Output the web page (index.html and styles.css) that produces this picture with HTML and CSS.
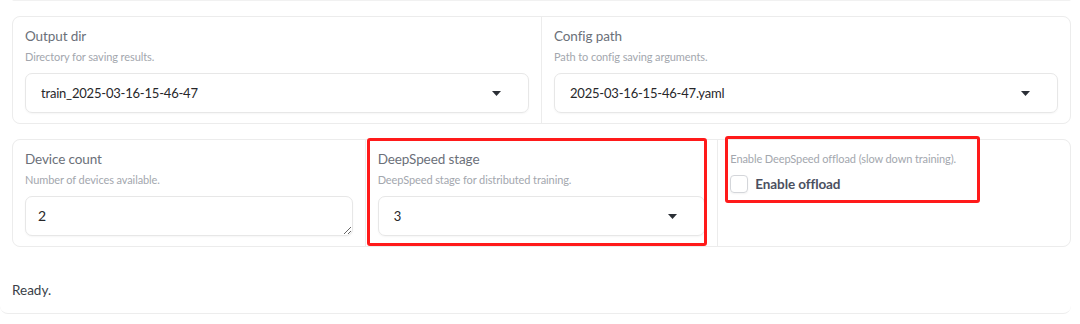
FILE: index.html
```html
<!DOCTYPE html>
<html lang="en">

<head>
    <meta charset="UTF-8">
    <meta name="viewport" content="width=device-width, initial-scale=1.0">
    <title>Train settings</title>
    <link rel="stylesheet" href="styles.css">
</head>

<body>
    <div class="page">
        <div class="prev-edge"></div>

        <div class="form-row cols-2">
            <div class="block">
                <span class="label">Output dir</span>
                <span class="info">Directory for saving results.</span>
                <div class="dropdown">
                    <span class="value">train_2025-03-16-15-46-47</span>
                    <svg class="caret" width="9" height="5" viewBox="0 0 9 5"><path d="M0 0 L9 0 L4.5 5 Z" fill="#2b2f36"/></svg>
                </div>
            </div>
            <div class="block">
                <span class="label">Config path</span>
                <span class="info">Path to config saving arguments.</span>
                <div class="dropdown">
                    <span class="value">2025-03-16-15-46-47.yaml</span>
                    <svg class="caret" width="9" height="5" viewBox="0 0 9 5"><path d="M0 0 L9 0 L4.5 5 Z" fill="#2b2f36"/></svg>
                </div>
            </div>
        </div>

        <div class="form-row cols-3">
            <div class="block">
                <span class="label">Device count</span>
                <span class="info">Number of devices available.</span>
                <textarea class="textbox" rows="1">2</textarea>
            </div>
            <div class="block">
                <span class="label">DeepSpeed stage</span>
                <span class="info">DeepSpeed stage for distributed training.</span>
                <div class="dropdown">
                    <span class="value">3</span>
                    <svg class="caret" width="9" height="5" viewBox="0 0 9 5"><path d="M0 0 L9 0 L4.5 5 Z" fill="#2b2f36"/></svg>
                </div>
            </div>
            <div class="block">
                <span class="info">Enable DeepSpeed offload (slow down training).</span>
                <label class="check">
                    <span class="box"></span>
                    <span class="check-text">Enable offload</span>
                </label>
            </div>

            <!-- annotation boxes -->
            <div class="mark mark-stage"></div>
            <div class="mark mark-offload"></div>
        </div>

        <div class="status">Ready.</div>
    </div>
</body>

</html>
```

FILE: styles.css
```css
body {
    margin: 0;
    padding: 0;
    background: #fff;
    font-family: 'Lato', 'Noto Sans', sans-serif;
    color: #27272a;
}

.page {
    width: 1059px;
    padding: 0 9px 0 12px;
}

.prev-edge {
    height: 1px;
    border-bottom: 1px solid #f1f1f1;
    margin-top: -1px;
    border-radius: 0 0 8px 8px;
}

.form-row {
    display: grid;
    gap: 1px;
    background: #ececec;
    border: 1px solid #ececec;
    border-radius: 8px;
    margin-top: 15px;
}

.cols-2 {
    grid-template-columns: 1fr 1fr;
}

.cols-3 {
    grid-template-columns: repeat(3, 1fr);
    position: relative;
}

.block {
    background: #fff;
    padding: 9px 12px 10px 12px;
    display: flex;
    flex-direction: column;
}

.block:first-child {
    border-radius: 7px 0 0 7px;
}

.cols-2 .block:nth-child(2),
.cols-3 .block:nth-child(3) {
    border-radius: 0 7px 7px 0;
}

.cols-3 .block:nth-child(3) {
    padding-top: 8px;
}

.label {
    font-size: 13.5px;
    line-height: 20px;
    color: #6b7079;
    letter-spacing: -0.1px;
}

.info {
    font-size: 11px;
    line-height: 16px;
    color: #a3a7ae;
    margin-top: 3px;
    letter-spacing: -0.1px;
}

.dropdown {
    margin-top: 8px;
    height: 38px;
    border: 1px solid #e7e7e7;
    border-radius: 7px;
    box-shadow: 0 1px 2px rgba(0, 0, 0, 0.04);
    display: flex;
    align-items: center;
    justify-content: space-between;
    padding: 0 27px 0 15px;
}

.value {
    font-size: 13px;
    color: #27272a;
    letter-spacing: -0.2px;
}

.textbox {
    margin-top: 8px;
    height: 40px;
    box-sizing: border-box;
    border: 1px solid #e7e7e7;
    border-radius: 7px;
    box-shadow: 0 1px 2px rgba(0, 0, 0, 0.04);
    padding: 10px 12px;
    font-family: 'Lato', 'Noto Sans', sans-serif;
    font-size: 14px;
    color: #27272a;
    resize: vertical;
    outline: none;
}

.check {
    display: flex;
    align-items: center;
    gap: 7px;
    margin-top: 8px;
}

.box {
    width: 16px;
    height: 16px;
    border: 1px solid #d4d6da;
    border-radius: 4px;
    box-shadow: 0 1px 2px rgba(0, 0, 0, 0.05);
}

.check-text {
    font-size: 13.5px;
    font-weight: 700;
    color: #4b5060;
    letter-spacing: -0.1px;
}

.mark {
    position: absolute;
    border: 3px solid #ff1a1a;
    border-radius: 3px;
}

.mark-stage {
    left: 354px;
    top: -2px;
    width: 334px;
    height: 102px;
}

.mark-offload {
    left: 712px;
    top: -4px;
    width: 249px;
    height: 61px;
}

.status {
    margin-top: 33px;
    margin-left: -12px;
    padding: 0 0 13px 12px;
    font-size: 13.5px;
    line-height: 20px;
    border-bottom: 1px solid #ededed;
    border-radius: 0 0 8px 8px;
    color: #3a3f48;
}
```
